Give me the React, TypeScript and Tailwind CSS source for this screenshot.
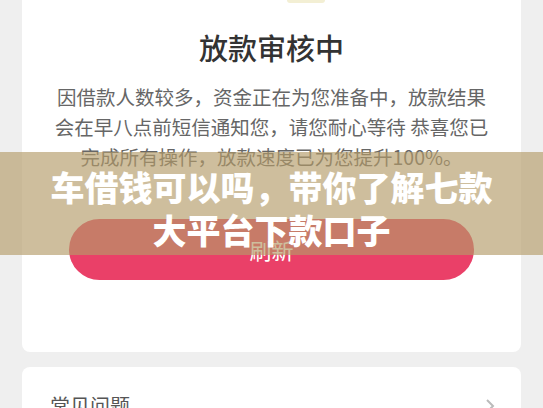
export default function App() {
  return (
    <div
      className="relative h-[408px] w-[543px] overflow-hidden bg-[#efefef] px-[22px]"
      style={{ fontFamily: '"Noto Sans CJK SC", "Noto Sans", sans-serif' }}
    >
      {/* status card */}
      <div className="flex flex-col items-center rounded-b-lg bg-white pb-[72px]">
        <div className="ml-[68px] h-[3px] w-[38px] rounded-b-full bg-[#f3efd4]" />
        <h1 className="mt-[27px] text-[29px] leading-[35px] font-medium text-[#333]">
          放款审核中
        </h1>
        <p className="mt-[17px] text-center text-[19.5px] leading-[30px] text-[#666]">
          因借款人数较多，资金正在为您准备中，放款结果
          <br />
          会在早八点前短信通知您，请您耐心等待 恭喜您已
          <br />
          完成所有操作，放款速度已为您提升100%。
        </p>
        <button className="mt-[47px] flex h-[61px] w-[405px] items-center justify-center rounded-full bg-[#ea4068] text-[22px] text-white">
          刷新
        </button>
      </div>

      {/* faq card */}
      <div className="mt-[15px] flex items-center justify-between rounded-t-lg bg-white pt-[25px] pr-[26px] pl-[28px] pb-4">
        <span className="text-[20px] leading-[28px] text-[#555]">常见问题</span>
        <svg width="10" height="16" viewBox="0 0 10 16" fill="none">
          <path d="M2 2l6 6-6 6" stroke="#bbb" strokeWidth="2" />
        </svg>
      </div>

      {/* title banner over the page */}
      <div className="absolute top-[152px] left-0 flex h-[103px] w-full flex-col items-center bg-[rgba(180,155,105,0.65)] pt-[13px]">
        <div className="text-center text-[34px] leading-[43px] font-black text-white">
          车借钱可以吗，带你了解七款
          <br />
          大平台下款口子
        </div>
      </div>
    </div>
  );
}
